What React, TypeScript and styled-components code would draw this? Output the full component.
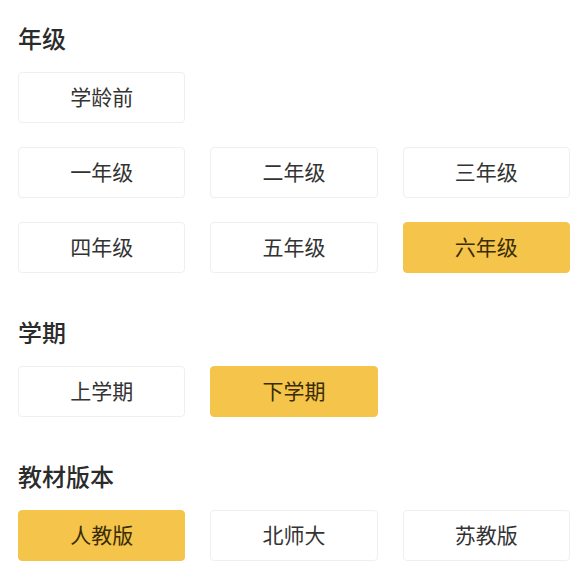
import styled, { createGlobalStyle } from "styled-components";
import { useState } from "react";

const GlobalStyle = createGlobalStyle`
  body {
    margin: 0;
    background: #ffffff;
    font-family: "Noto Sans CJK SC", "Noto Sans", sans-serif;
  }
`;

const Page = styled.div`
  padding: 23px 18px 0;
  display: flex;
  flex-direction: column;
  gap: 44px;
`;

const Section = styled.section`
  display: flex;
  flex-direction: column;
  gap: 17px;
`;

const Title = styled.h3`
  margin: 0;
  height: 32px;
  line-height: 29px;
  font-size: 24px;
  font-weight: 500;
  color: #2b2b2b;
`;

const Grid = styled.div`
  display: grid;
  grid-template-columns: repeat(3, 1fr);
  column-gap: 25px;
  row-gap: 24px;
`;

const Option = styled.button<{ $active: boolean; $newRow?: boolean }>`
  grid-column-start: ${(p) => (p.$newRow ? 1 : "auto")};
  height: 51px;
  border-radius: 4px;
  border: 1px solid ${(p) => (p.$active ? "#f4c44b" : "#efefef")};
  background: ${(p) => (p.$active ? "#f4c44b" : "#ffffff")};
  color: ${(p) => (p.$active ? "#3b2c05" : "#333333")};
  font-family: inherit;
  font-size: 21px;
  font-weight: 400;
  padding: 0 0 3px;
  cursor: pointer;
`;

type Group = { title: string; rows: string[][]; initial: string };

const groups: Group[] = [
  {
    title: "年级",
    rows: [["学龄前"], ["一年级", "二年级", "三年级"], ["四年级", "五年级", "六年级"]],
    initial: "六年级",
  },
  { title: "学期", rows: [["上学期", "下学期"]], initial: "下学期" },
  { title: "教材版本", rows: [["人教版", "北师大", "苏教版"]], initial: "人教版" },
];

function OptionGroup({ group }: { group: Group }) {
  const [picked, setPicked] = useState(group.initial);
  return (
    <Section>
      <Title>{group.title}</Title>
      <Grid>
        {group.rows.flatMap((row, i) =>
          row.map((label, j) => (
            <Option
              key={label}
              $active={picked === label}
              $newRow={j === 0 && i > 0}
              onClick={() => setPicked(label)}
            >
              {label}
            </Option>
          ))
        )}
      </Grid>
    </Section>
  );
}

export default function App() {
  return (
    <>
      <GlobalStyle />
      <Page>
        {groups.map((g) => (
          <OptionGroup key={g.title} group={g} />
        ))}
      </Page>
    </>
  );
}
